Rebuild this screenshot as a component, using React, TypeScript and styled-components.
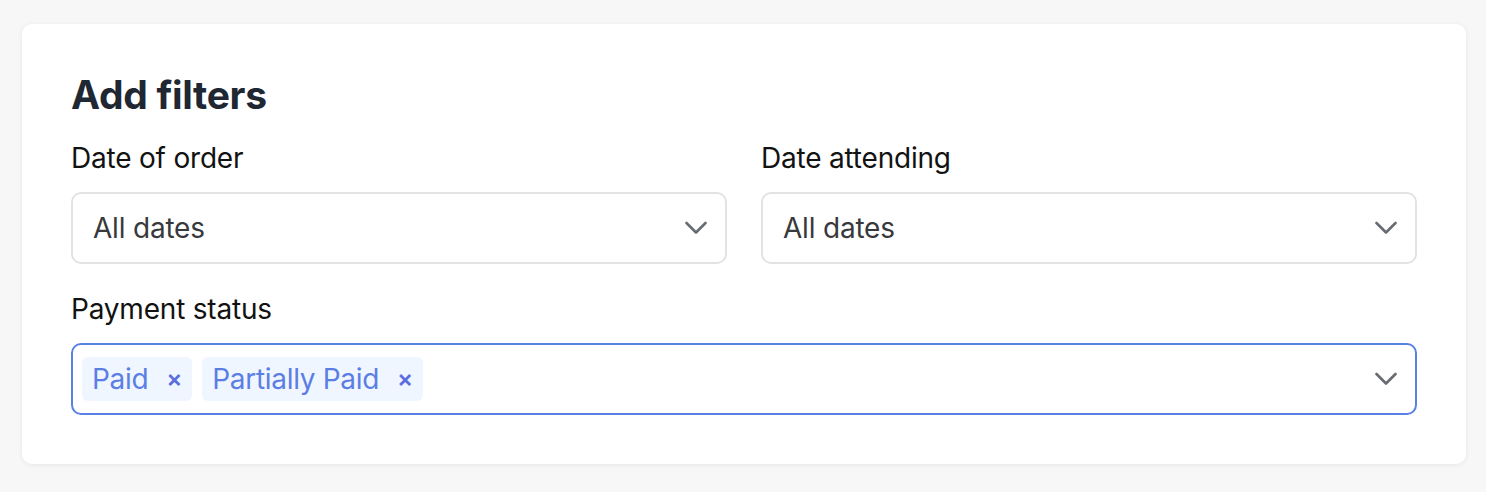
import React from 'react';
import styled, { createGlobalStyle } from 'styled-components';

const GlobalStyle = createGlobalStyle`
  html, body { margin: 0; padding: 0; background: #f7f7f7; }
  body { font-family: Inter, "Noto Sans", sans-serif; -webkit-font-smoothing: antialiased; }
`;

const Page = styled.div`
  padding: 24px 20px 28px 22px;
`;

const Card = styled.div`
  background: #fff;
  border-radius: 10px;
  box-shadow: 0 1px 5px rgba(0, 0, 0, 0.07);
  padding: 48px 49px 49px;
`;

const Title = styled.h2`
  margin: 0 0 23px;
  font-size: 39px;
  line-height: 46px;
  font-weight: 700;
  color: #1e2732;
  letter-spacing: -0.3px;
`;

const Row = styled.div`
  display: grid;
  grid-template-columns: 1fr 1fr;
  column-gap: 34px;
  margin-bottom: 28px;
`;

const Field = styled.div`
  display: flex;
  flex-direction: column;
  gap: 17px;
`;

const Label = styled.label`
  font-size: 28px;
  line-height: 34px;
  color: #121212;
  letter-spacing: -0.2px;
`;

const Select = styled.div<{ $active?: boolean }>`
  box-sizing: border-box;
  height: 72px;
  display: flex;
  align-items: center;
  gap: 10px;
  border: 2px solid ${(p) => (p.$active ? '#5a80e6' : '#e3e3e3')};
  border-radius: 10px;
  padding: 0 18px 0 ${(p) => (p.$active ? '9px' : '20px')};
`;

const Value = styled.span`
  flex: 1;
  font-size: 28px;
  color: #38393c;
  letter-spacing: -0.2px;
`;

const Tag = styled.span`
  display: inline-flex;
  align-items: center;
  gap: 18px;
  height: 44px;
  padding: 0 10px;
  background: #f0f6ff;
  border-radius: 6px;
  font-size: 28px;
  color: #5b7ee5;
  letter-spacing: -0.3px;
`;

const Remove = styled.span`
  font-size: 24px;
  font-weight: 600;
  line-height: 1;
  color: #5a6ee0;
`;

const Spacer = styled.span`
  flex: 1;
`;

const Chevron = () => (
  <svg width="22" height="14" viewBox="0 0 22 14" fill="none">
    <path d="M1.5 2L11 11.5L20.5 2" stroke="#676c74" strokeWidth="2.6" strokeLinecap="round" strokeLinejoin="round" />
  </svg>
);

const App: React.FC = () => (
  <>
    <GlobalStyle />
    <Page>
      <Card>
        <Title>Add filters</Title>
        <Row>
          <Field>
            <Label>Date of order</Label>
            <Select>
              <Value>All dates</Value>
              <Chevron />
            </Select>
          </Field>
          <Field>
            <Label>Date attending</Label>
            <Select>
              <Value>All dates</Value>
              <Chevron />
            </Select>
          </Field>
        </Row>
        <Field>
          <Label>Payment status</Label>
          <Select $active>
            {['Paid', 'Partially Paid'].map((t) => (
              <Tag key={t}>
                {t}
                <Remove>×</Remove>
              </Tag>
            ))}
            <Spacer />
            <Chevron />
          </Select>
        </Field>
      </Card>
    </Page>
  </>
);

export default App;
